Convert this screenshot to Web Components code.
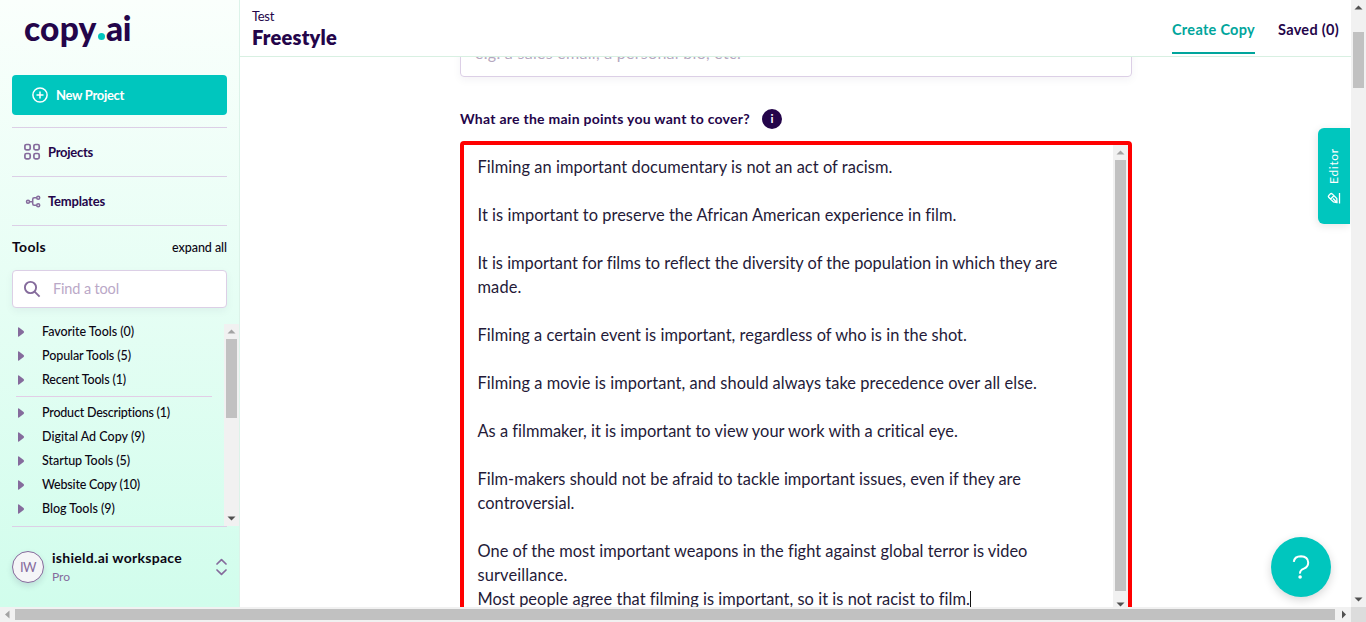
<!DOCTYPE html>
<html lang="en">
<head>
<meta charset="utf-8">
<title>Freestyle - copy.ai</title>
<style>
  html, body { margin: 0; height: 100%; overflow: hidden; background: #fff; }
  body { font-family: Lato, "Open Sans", sans-serif; color: #24054a; }
</style>
</head>
<body>
<app-window></app-window>
<script>
class Base extends HTMLElement {
  constructor() {
    super();
    this.attachShadow({ mode: 'open' });
  }
  connectedCallback() {
    this.shadowRoot.innerHTML = '<style>*{box-sizing:border-box}</style>' + this.view();
    if (this.ready) this.ready();
  }
  a(name) { return this.getAttribute(name) || ''; }
}

/* One line of text, tracked so that it spans the width given by "w". */
customElements.define('fit-text', class extends Base {
  view() {
    return `<style>:host{display:inline-block;white-space:pre;flex:none}span{display:inline-block}</style><span><slot></slot></span>`;
  }
  ready() {
    const span = this.shadowRoot.querySelector('span');
    const w = parseFloat(this.a('w')), n = this.textContent.length;
    span.style.letterSpacing = '0.001px';
    const natural = span.getBoundingClientRect().width;
    span.style.letterSpacing = ((w - natural) / n).toFixed(4) + 'px';
    this.style.width = w + 'px';
  }
});

customElements.define('scroll-bar', class extends Base {
  view() {
    const h = this.hasAttribute('horizontal');
    const start = h ? 'M9.5 3.5v8L5 7.5z' : 'M3.5 9.5h8L7.5 5.5z';
    const end = h ? 'M6 3.5v8L10 7.5z' : 'M3.5 5.5h8L7.5 9.5z';
    const c = this.hasAttribute('at-start') ? '#a3a3a3' : '#505050';
    return `<style>
      :host{display:flex;flex-direction:${h ? 'row' : 'column'};background:#f1f1f1;flex:none;${h ? 'height' : 'width'}:15px}
      svg{width:15px;height:15px;flex:none;display:block}
      .track{flex:1;display:flex;flex-direction:${h ? 'row' : 'column'};padding:${h ? '2px 0' : '0 2px'};min-height:0}
      .gap{flex:none;${h ? 'width' : 'height'}:${this.a('offset') || 0}px}
      .thumb{background:#c1c1c1;flex:none;${h ? 'width' : 'height'}:${this.a('size')}px}
    </style><svg><path d="${start}" fill="${c}"/></svg><div class="track"><div class="gap"></div><div class="thumb"></div></div><svg><path d="${end}" fill="#505050"/></svg>`;
  }
});

customElements.define('nav-item', class extends Base {
  view() {
    return `<style>
      :host{display:flex;align-items:center;height:49px;border-top:1px solid #dccfe6;padding-left:12px;font-size:13px;font-weight:700;color:#24054a}
      .icon{width:24px;height:18px;display:block}
      ::slotted(svg){display:block}
      ::slotted(fit-text){padding-bottom:1px}
    </style><div class="icon"><slot name="icon"></slot></div><slot></slot>`;
  }
});

customElements.define('tool-group', class extends Base {
  view() {
    return `<style>
      :host{display:flex;align-items:center;height:24px;font-size:12.5px;color:#0c0614;font-weight:500;padding-left:6px}
      svg{width:6px;height:10px;margin-right:18px;flex:none}
      ::slotted(fit-text){padding-bottom:1px}
    </style><svg viewBox="0 0 6 10"><path d="M0 .8Q.2 0 1 .6L5.6 4Q6.4 5 5.6 6L1 9.4Q.2 10 0 9.2z" fill="#856b9c"/></svg><slot></slot>`;
  }
});

customElements.define('brand-logo', class extends Base {
  view() {
    return `<style>
      :host{display:flex;height:75px;padding:7px 0 0 12px;font:900 33.5px/42px Lato,sans-serif;color:#24054a}
      .dot{width:7px;height:7px;border-radius:50%;background:#00c6be;margin:26px 1px 0 1.500px}
    </style><fit-text w="72.500">copy</fit-text><div class="dot"></div><fit-text w="25">ai</fit-text>`;
  }
});

customElements.define('side-bar', class extends Base {
  view() {
    const t = (s, w) => `<tool-group><fit-text w="${w}">${s}</fit-text></tool-group>`;
    return `<style>
      :host{display:flex;flex-direction:column;width:240px;height:607px;border-right:1px solid #dcf3e9;padding-left:12px;background:linear-gradient(#fafffc,#d1fdec)}
      .new{height:40px;width:215px;border-radius:4px;background:#00c6be;color:#fff;display:flex;align-items:center;gap:8px;padding-left:20px;font-size:13px;font-weight:700;margin-bottom:12px;flex:none}
      nav{width:215px}
      .head{display:flex;justify-content:space-between;align-items:center;width:215px;height:45px;border-top:1px solid #dccfe6;color:#0c0614;font-size:14px;font-weight:700;padding-bottom:3px;flex:none}
      .head .ex{font-size:12.5px;font-weight:500;padding-top:2px}
      .search{width:215px;height:38px;border:1px solid #dccfe6;border-radius:4px;background:#fff;box-shadow:0 3px 8px rgba(36,5,74,.05);display:flex;align-items:center;padding-left:10px;gap:12px;font-size:14.5px;color:#baa8c7;flex:none}
      .search fit-text{padding-bottom:2px}
      .scroll{display:flex;height:202px;margin-top:16px;overflow:hidden;flex:none}
      .list{width:212px;margin-top:-4px}
      hr{border:0;height:1px;background:#e2cde6;margin:4px 12px 4px 4px}
      .team{border-top:1px solid #dccfe6;width:215px;display:flex;align-items:center;height:81px}
      .av{width:32px;height:32px;border:1px solid #856b9c;border-radius:50%;background:#f5f5f7;color:#856b9c;font-size:13px;display:flex;align-items:center;justify-content:center;box-shadow:0 3px 6px rgba(36,5,74,.12);margin-right:8px}
      .who{flex:1;font-size:14px;line-height:18px;font-weight:700;color:#0c0614;display:flex;flex-direction:column}
      .who .plan{font-size:12px;font-weight:400;color:#856b9c;padding-top:1px;margin-bottom:-1px}
    </style>
    <brand-logo></brand-logo>
    <div class="new"><svg width="16" height="16" fill="none" stroke="#fff" stroke-width="1.5"><circle cx="8" cy="8" r="7.1"/><path d="M8 4.5v7M4.5 8h7"/></svg><fit-text w="68">New Project</fit-text></div>
    <nav>
      <nav-item><svg slot="icon" width="18" height="18" fill="none" stroke="#856b9c" stroke-width="1.7"><rect x=".9" y="1.5" width="5.3" height="5.3" rx="1.6"/><rect x="9.9" y="1.5" width="5.3" height="5.3" rx="1.6"/><rect x=".9" y="10.500" width="5.3" height="5.3" rx="1.6"/><rect x="9.9" y="10.500" width="5.3" height="5.3" rx="1.6"/></svg><fit-text w="45">Projects</fit-text></nav-item>
      <nav-item><svg slot="icon" width="18" height="18" fill="none" stroke="#856b9c" stroke-width="1.500"><circle cx="4" cy="9.7" r="1.5"/><path d="M5.5 9.7h3M12.700 5.700h-2.500q-1.500 0-1.500 1.500v4.600q0 1.500 1.500 1.500h2.500"/><circle cx="14.200" cy="5.700" r="1.500"/><circle cx="14.200" cy="13.300" r="1.500"/></svg><fit-text w="57">Templates</fit-text></nav-item>
    </nav>
    <div class="head"><fit-text w="34">Tools</fit-text><fit-text class="ex" w="55">expand all</fit-text></div>
    <div class="search"><svg width="18" height="18" fill="none" stroke="#856b9c" stroke-width="1.9"><circle cx="7.500" cy="7.500" r="5.600"/><path d="M11.600 11.600l5 5"/></svg><fit-text w="66">Find a tool</fit-text></div>
    <div class="scroll"><div class="list">
      ${t('Favorite Tools (0)', 92)}${t('Popular Tools (5)', 89)}${t('Recent Tools (1)', 84)}<hr>
      ${t('Product Descriptions (1)', 128)}${t('Digital Ad Copy (9)', 103)}${t('Startup Tools (5)', 88)}${t('Website Copy (10)', 98)}${t('Blog Tools (9)', 73)}
    </div><scroll-bar at-start size="79"></scroll-bar></div>
    <div class="team"><div class="av"><fit-text w="16">IW</fit-text></div>
      <div class="who"><fit-text w="130">ishield.ai workspace</fit-text><fit-text class="plan" w="18">Pro</fit-text></div>
      <svg width="11" height="18" fill="none" stroke="#856b9c" stroke-width="1.7" stroke-linecap="round" stroke-linejoin="round"><path d="M1 6L5.500 1.600 10 6M1 12L5.500 16.400 10 12"/></svg>
    </div>`;
  }
});

customElements.define('page-header', class extends Base {
  view() {
    return `<style>
      :host{display:flex;justify-content:space-between;height:57px;border-bottom:1px solid #d8f0e2;background:#fff;padding:0 12px;flex:none;position:relative}
      .title{display:flex;flex-direction:column;padding-top:8px;font-weight:800;font-size:20px;line-height:26px}
      .title .p{font-size:13px;line-height:16px;font-weight:400}
      .tabs{display:flex;gap:23px;font-size:14.500px;font-weight:700;line-height:20px}
      .tabs fit-text{height:54px;padding-top:19.500px;box-sizing:border-box}
      .on{color:#00a59c;border-bottom:2px solid #00a59c}
    </style><div class="title"><fit-text class="p" w="22">Test</fit-text><fit-text w="85">Freestyle</fit-text></div>
    <div class="tabs"><fit-text class="on" w="83">Create Copy</fit-text><fit-text w="61">Saved (0)</fit-text></div>`;
  }
});

customElements.define('points-area', class extends Base {
  view() {
    const lines = [['Filming an important documentary is not an act of racism.', 415], 0,
      ['It is important to preserve the African American experience in film.', 479], 0,
      ['It is important for films to reflect the diversity of the population in which they are', 580], ['made.', 44], 0,
      ['Filming a certain event is important, regardless of who is in the shot.', 489.5], 0,
      ['Filming a movie is important, and should always take precedence over all else.', 559.5], 0,
      ['As a filmmaker, it is important to view your work with a critical eye.', 480.5], 0,
      ['Film-makers should not be afraid to tackle important issues, even if they are', 543.5], ['controversial.', 97], 0,
      ['One of the most important weapons in the fight against global terror is video', 550], ['surveillance.', 90],
      ['Most people agree that filming is important, so it is not racist to film.', 492.5]];
    return `<style>
      :host{display:flex;border:4px solid #f00;border-radius:4px;height:475px;background:#fff;flex:none}
      .text{flex:1;padding:10px 0 0 13.500px;font-size:16.4px;line-height:24px;color:#241a38;font-weight:400}
      .line{height:24px;display:flex;align-items:center}
      .caret{width:1px;height:17px;background:#111}
    </style><div class="text">${lines.map((l, i) => `<div class="line">${l ? `<fit-text w="${l[1]}">${l[0]}</fit-text>` : ''}${i === lines.length - 1 ? '<i class="caret"></i>' : ''}</div>`).join('')}</div><scroll-bar at-start size="431"></scroll-bar>`;
  }
});

customElements.define('copy-form', class extends Base {
  view() {
    return `<style>
      :host{display:flex;flex-direction:column;width:672px;margin-left:220px}
      .input{height:46px;margin-top:-26px;border:1px solid #dccfe6;border-radius:4px;box-shadow:0 3px 8px rgba(36,5,74,.05);padding:9px 0 0 14px;font-size:16px;line-height:24px;color:#b5a8c0;flex:none}
      .label{height:64px;display:flex;align-items:center;gap:12px;padding-top:20px;font-size:14px;font-weight:700;flex:none}
      .label fit-text{padding-bottom:2px}
      .info{width:20px;height:20px;border-radius:50%;background:#24054a;color:#fff;font-size:12px;line-height:20px;text-align:center}
    </style>
    <div class="input"><fit-text w="266">e.g. a sales email, a personal bio, etc.</fit-text></div>
    <div class="label"><fit-text w="290">What are the main points you want to cover?</fit-text><div class="info">i</div></div>
    <points-area></points-area>`;
  }
});

customElements.define('editor-tab', class extends Base {
  view() {
    return `<style>
      :host{position:absolute;right:1px;top:128px;width:32px;height:96px;border-radius:6px 0 0 6px;background:#00c6be;color:#fff;display:flex;flex-direction:column;align-items:center;gap:8px;padding-top:21px;box-shadow:-1px 2px 8px rgba(0,0,0,.1)}
      .t{writing-mode:vertical-rl;transform:rotate(180deg);font-size:12px;line-height:16px;height:35px;letter-spacing:.7px}
    </style><div class="t">Editor</div><svg width="14" height="13" fill="none" stroke="#fff" stroke-width="1.300"><path d="M12.500 1v10.500M10 10.500L6.500 10 1.700 5.300q-.8-1 .1-1.800l1.700-1.700q.8-.7 1.700.1L9.800 6.600z M3.600 7l3.300-3.300M6 6.500l3.500 3.500"/></svg>`;
  }
});

customElements.define('help-button', class extends Base {
  view() {
    return `<style>
      :host{position:absolute;right:20px;top:537px;width:60px;height:60px;border-radius:50%;background:#00c6be;box-shadow:0 3px 10px rgba(0,0,0,.16)}
      svg{display:block}
    </style><svg width="60" height="60" fill="none" stroke="#fff" stroke-width="2"><path d="M22.800 24.800q.6-5.600 7.200-5.600 7 .2 7.200 6.300 0 4.500-4.300 6.100-4.100 1.500-3.900 5"/><circle cx="29.100" cy="40" r="1.800" fill="#fff" stroke="none"/></svg>`;
  }
});

customElements.define('app-window', class extends Base {
  view() {
    return `<style>
      :host{display:grid;grid-template:607px 15px / 1351px 15px;width:1366px;height:622px;overflow:hidden}
      .view{display:flex;position:relative;overflow:hidden}
      main{flex:1;display:flex;flex-direction:column;min-width:0;overflow:hidden}
      .corner{background:#dcdcdc}
    </style>
    <div class="view"><side-bar></side-bar><main><page-header></page-header><copy-form></copy-form></main><editor-tab></editor-tab><help-button></help-button></div>
    <scroll-bar offset="17" size="56"></scroll-bar>
    <scroll-bar horizontal at-start size="1320"></scroll-bar>
    <div class="corner"></div>`;
  }
});
</script>
</body>
</html>
